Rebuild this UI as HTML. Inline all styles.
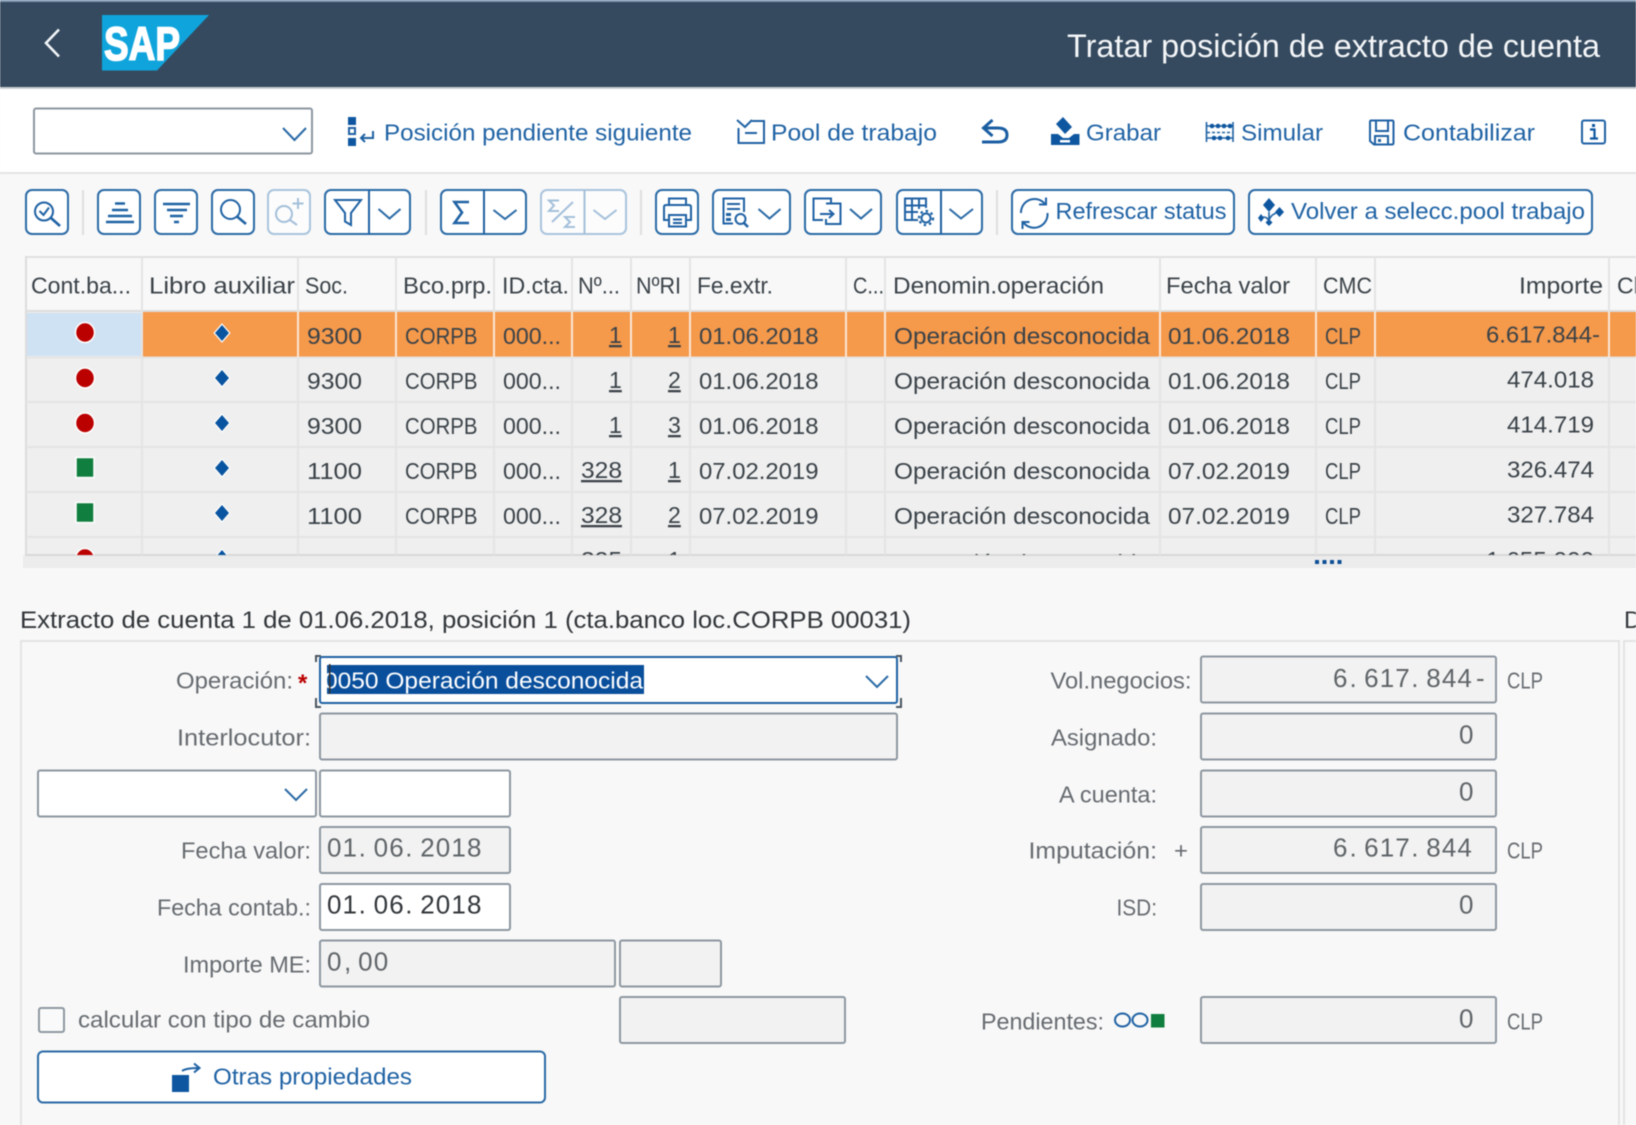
<!DOCTYPE html>
<html lang="es">
<head>
<meta charset="utf-8">
<title>Tratar posición de extracto de cuenta</title>
<style>
html,body{margin:0;padding:0;width:1636px;height:1125px;overflow:hidden;background:#f8f8f8}
svg{display:block;filter:blur(.45px)}
text{font-family:"Liberation Sans",sans-serif;font-size:23px;white-space:pre}
.l{fill:#1f62a4;transform:translateY(.7px)}
.t{fill:#3a4248}
.h{fill:#3a4248;transform:translateY(.5px)}
.f{fill:#666b70;transform:translateY(.7px)}
.m{font-size:26px;fill:#5f6468;transform:translateY(.7px)}
.ro{fill:#f2f2f2;stroke:#8d97a1;stroke-width:2}
.wh{fill:#fff;stroke:#8d97a1;stroke-width:2}
.btn{fill:#fff;stroke:#2a6aa6;stroke-width:2}
.dis{fill:#fcfcfc;stroke:#a9c4dd;stroke-width:2}
.ic{fill:none;stroke:#1f62a4;stroke-width:2}
.icb{fill:none;stroke:#1f62a4;stroke-width:2.6}
.id{fill:none;stroke:#a4c0da;stroke-width:2}
.ch{fill:none;stroke:#2a6aa6;stroke-width:2}
</style>
</head>
<body>
<svg xmlns="http://www.w3.org/2000/svg" width="1636" height="1125" viewBox="0 0 1636 1125">
<defs>
<clipPath id="tb"><rect x="26" y="257" width="1610" height="298"/></clipPath>
<clipPath id="sel"><rect x="327" y="660" width="340" height="40"/></clipPath>
</defs>
<rect width="1636" height="1125" fill="#f8f8f8"/>

<!-- shell header -->
<rect width="1636" height="88" fill="#354a5f"/>
<rect width="1636" height="2" fill="#7d95ae"/>
<rect y="87" width="1636" height="2" fill="#c9ced3"/>
<path d="M59 29.5 L46 43 L59 56.5" fill="none" stroke="#f2f5f8" stroke-width="2.6"/>
<polygon points="102,15 209,15 157,70.5 102,70.5" fill="#0fa4dc"/>
<text x="104" y="60" font-weight="bold" style="font-size:47px" fill="#fff" stroke="#fff" stroke-width="1.6" textLength="76" lengthAdjust="spacingAndGlyphs">SAP</text>
<text x="1067" y="57" fill="#f4f6f8" style="font-size:32px" textLength="533" lengthAdjust="spacingAndGlyphs">Tratar posición de extracto de cuenta</text>

<!-- app toolbar -->
<rect y="89" width="1636" height="83" fill="#fff"/>
<rect y="172" width="1636" height="2" fill="#e3e3e3"/>
<rect x="34" y="108.5" width="278" height="45" rx="2" class="wh"/>
<path d="M283 128 L294.5 140 L306 128" class="ch"/>

<rect x="348" y="117" width="8" height="8" fill="#0e57a0"/>
<rect x="349" y="128" width="6" height="6" fill="none" stroke="#1f62a4" stroke-width="2"/>
<rect x="348" y="138" width="8" height="8" fill="#0e57a0"/>
<path d="M373 131 V138 H361 M365 134 L361 138 L365 142" class="ic"/>
<text x="384" y="140" class="l" textLength="308" lengthAdjust="spacingAndGlyphs">Posición pendiente siguiente</text>

<path d="M738.5 128 V143 H764 V121 H752 M737 120 L745 127 L752 120 M745 133 H757" class="ic"/>
<text x="771" y="140" class="l" textLength="166" lengthAdjust="spacingAndGlyphs">Pool de trabajo</text>

<path d="M992.5 120 L983.5 128 L992.5 136 M984 128 H998 Q1007 128 1007 135 Q1007 142 998 142 H982" fill="none" stroke="#1a5ea2" stroke-width="3"/>

<polygon points="1063,117 1072,127 1065,134 1056,124" fill="#0e57a0"/>
<path d="M1051 134 H1058 L1063 138 H1069 L1074 134 H1079.5 V145 H1051 Z" fill="#0e57a0"/>
<rect x="1060" y="140" width="10" height="2.5" fill="#fff"/>
<text x="1086" y="140" class="l" textLength="75" lengthAdjust="spacingAndGlyphs">Grabar</text>

<path d="M1206.5 122 V142 M1233 122 V142 M1206 126 H1233 M1206 138 H1233" fill="none" stroke="#1f62a4" stroke-width="1.6"/>
<path d="M1207 132.5 H1233" fill="none" stroke="#1f62a4" stroke-width="1.6" stroke-dasharray="3 2"/>
<g fill="#0e57a0"><circle cx="1212" cy="126" r="2.3"/><circle cx="1218" cy="126" r="2.3"/><circle cx="1224" cy="126" r="2.3"/><circle cx="1230" cy="126" r="2.3"/><circle cx="1214" cy="138" r="2.3"/><circle cx="1220" cy="138" r="2.3"/><circle cx="1228" cy="138" r="2.3"/></g>
<text x="1241" y="140" class="l" textLength="82" lengthAdjust="spacingAndGlyphs">Simular</text>

<path d="M1371 120.5 H1392 Q1393.5 120.5 1393.5 122 V143 Q1393.5 144.5 1392 144.5 H1374 L1370 141 V122 Q1370 120.5 1371 120.5 Z M1376 121 V131 H1388 V121 M1375 144 V136 H1388 V144" class="ic"/>
<rect x="1378" y="139" width="3" height="3" fill="#1f62a4"/>
<text x="1403" y="140" class="l" textLength="132" lengthAdjust="spacingAndGlyphs">Contabilizar</text>

<rect x="1582" y="120.5" width="23" height="23" rx="2" class="ic"/>
<path d="M1590 129.5 H1594.5 V138.5 M1590 138.5 H1598" fill="none" stroke="#0e57a0" stroke-width="2.2"/>
<rect x="1592" y="124" width="3" height="3" fill="#0e57a0"/>

<!-- ALV toolbar -->
<g fill="#dedede"><rect x="82" y="190" width="2" height="45"/><rect x="425" y="190" width="2" height="45"/><rect x="640" y="190" width="2" height="45"/><rect x="996" y="190" width="2" height="45"/></g>

<rect x="26" y="190" width="42" height="44" rx="6" class="btn"/>
<circle cx="44" cy="211.5" r="9" class="ic"/>
<path d="M51 218 L60 226" class="icb"/>
<path d="M39.5 211 L43.5 215 L49 207.5" class="ic"/>

<rect x="98" y="190" width="42" height="44" rx="6" class="btn"/>
<path d="M115 203.5 H125 M112 210 H128 M108 216 H132 M106 222 H134" class="icb"/>

<rect x="155" y="190" width="42" height="44" rx="6" class="btn"/>
<path d="M163 204 H190 M167 210 H187 M170 216 H183 M174 222 H179" class="icb"/>

<rect x="212" y="190" width="42" height="44" rx="6" class="btn"/>
<circle cx="230.5" cy="209.5" r="9.5" class="ic"/>
<path d="M237 216.5 L246 224" class="icb"/>

<rect x="268" y="190" width="42" height="44" rx="6" class="dis"/>
<circle cx="284" cy="214" r="8" class="id"/>
<path d="M290 220 L297 225 M298 198 V209 M292.5 203.5 H303.5" class="id"/>

<rect x="325" y="190" width="85" height="44" rx="6" class="btn"/>
<path d="M369 190 V234" class="ic"/>
<path d="M335 200 H361 L351 213 V225 L345 221.5 V213 Z" class="ic"/>
<path d="M378.5 209 L389.5 218.5 L400.5 209" class="ch"/>

<rect x="441" y="190" width="85" height="44" rx="6" class="btn"/>
<path d="M484 190 V234" class="ic"/>
<path d="M469 202 H454.5 L462 212.5 L454.5 223 H469" class="icb"/>
<path d="M493.5 210 L505 219 L516.5 210" class="ch"/>

<rect x="541" y="190" width="85" height="44" rx="6" class="dis"/>
<path d="M584.5 190 V234" class="id"/>
<path d="M559 200.5 H549 L554 205.5 L549 211 H559 M552 222 L573 202 M575 217 H565 L570 222 L565 227 H575" class="id"/>
<path d="M593.5 210 L605 219 L616.5 210" fill="none" stroke="#a4c0da" stroke-width="2"/>

<rect x="656" y="190" width="42" height="44" rx="6" class="btn"/>
<path d="M669 205 V198.5 H686 V205 M669 220 H664 V207 Q664 205 666 205 H689 Q691 205 691 207 V220 H686 M669 215 H686 V226.5 H669 Z M673 219.5 H682 M673 223 H682" class="ic"/>

<rect x="713" y="190" width="77" height="44" rx="6" class="btn"/>
<path d="M733 223.5 H723.5 V198.5 H744 V212 M727 204 H740 M727 209 H740" class="ic"/>
<rect x="726" y="213" width="5" height="3" fill="#1f62a4"/>
<rect x="726" y="218" width="5" height="3" fill="#1f62a4"/>
<circle cx="740.5" cy="219" r="5" class="ic"/>
<path d="M744 223 L748 227" class="icb"/>
<path d="M758.5 209 L769.5 218.5 L780.5 209" class="ch"/>

<rect x="805" y="190" width="76" height="44" rx="6" class="btn"/>
<path d="M831 203 V198.5 H813.5 V220 H823 M826 203.5 H840.5 V224 H826 V219" class="ic"/>
<path d="M820 214 H833 M829 210 L833.5 214 L829 218" class="ic"/>
<path d="M850 209 L861 218.5 L872 209" class="ch"/>

<rect x="897" y="190" width="85" height="44" rx="6" class="btn"/>
<path d="M941 190 V234" class="ic"/>
<path d="M918 212 H905 V198.5 H926 V208 M912 198.5 V220 H918 M919 198.5 V209 M905 205.5 H926 M905 213 V220 H914" class="ic"/>
<circle cx="926" cy="218" r="4.5" class="ic"/>
<circle cx="926" cy="218" r="7" fill="none" stroke="#1f62a4" stroke-width="2.4" stroke-dasharray="2.4 3"/>
<path d="M949.5 209 L961 218.5 L973 209" class="ch"/>

<rect x="1012" y="190" width="222" height="44" rx="6" class="btn"/>
<path d="M1021 213 A13.5 13.5 0 0 1 1045 204 M1047.5 213 A13.5 13.5 0 0 1 1023 222" class="ic"/>
<path d="M1039 204.5 H1046 V197.5 M1029.5 222 H1022.5 V229" class="ic"/>
<text x="1055.5" y="218.5" class="l" textLength="171" lengthAdjust="spacingAndGlyphs">Refrescar status</text>

<rect x="1249" y="190" width="343" height="44" rx="6" class="btn"/>
<polygon points="1269,198 1275,205 1269,212 1263,205" fill="#0e57a0"/>
<polygon points="1279.5,207 1284,212 1279.5,217 1275,212" fill="#0e57a0"/>
<polygon points="1261,214 1264,218 1261,222 1258,218" fill="#0e57a0"/>
<polygon points="1269,219 1272.5,222.5 1269,226 1265.5,222.5" fill="#0e57a0"/>
<path d="M1269 212 V222 M1269 222 Q1269 216 1276 213 M1269 222 Q1268 217 1263 217" fill="none" stroke="#1f62a4" stroke-width="1.6"/>
<text x="1291" y="218.5" class="l" textLength="294" lengthAdjust="spacingAndGlyphs">Volver a selecc.pool trabajo</text>

<!-- table -->
<rect x="23" y="555" width="1613" height="13" fill="#ececec"/>
<g fill="#0e4f96"><rect x="1315" y="560" width="4" height="4"/><rect x="1322.5" y="560" width="4" height="4"/><rect x="1330" y="560" width="4" height="4"/><rect x="1337.5" y="560" width="4" height="4"/></g>
<rect x="26" y="257" width="1610" height="298" fill="#efefef"/>
<rect x="26" y="257" width="1610" height="54" fill="#f8f8f8"/>
<rect x="25" y="256" width="1611" height="2" fill="#e0e0e0"/>
<rect x="25" y="256" width="2" height="300" fill="#dcdcdc"/>
<rect x="26" y="310" width="1610" height="2" fill="#dcdcdc"/>
<rect x="26" y="554" width="1610" height="2" fill="#d8d8d8"/>
<rect x="27" y="313" width="115" height="43" fill="#cfe2f3"/>
<rect x="142" y="312" width="1494" height="44.5" fill="#f5994b"/>
<g fill="#e4e4e4">
<rect x="26" y="356.5" width="1610" height="2"/><rect x="26" y="401" width="1610" height="2"/><rect x="26" y="446" width="1610" height="2"/><rect x="26" y="491" width="1610" height="2"/><rect x="26" y="536" width="1610" height="2"/>
<rect x="141" y="257" width="2" height="298"/><rect x="297" y="257" width="2" height="298"/><rect x="395" y="257" width="2" height="298"/><rect x="493" y="257" width="2" height="298"/><rect x="571" y="257" width="2" height="298"/><rect x="630" y="257" width="2" height="298"/><rect x="689" y="257" width="2" height="298"/><rect x="845" y="257" width="2" height="298"/><rect x="884" y="257" width="2" height="298"/><rect x="1159" y="257" width="2" height="298"/><rect x="1315" y="257" width="2" height="298"/><rect x="1374" y="257" width="2" height="298"/><rect x="1608" y="257" width="2" height="298"/>
</g>
<g fill="#fae6d4">
<rect x="297" y="312" width="2" height="45"/><rect x="395" y="312" width="2" height="45"/><rect x="493" y="312" width="2" height="45"/><rect x="571" y="312" width="2" height="45"/><rect x="630" y="312" width="2" height="45"/><rect x="689" y="312" width="2" height="45"/><rect x="845" y="312" width="2" height="45"/><rect x="884" y="312" width="2" height="45"/><rect x="1159" y="312" width="2" height="45"/><rect x="1315" y="312" width="2" height="45"/><rect x="1374" y="312" width="2" height="45"/><rect x="1608" y="312" width="2" height="45"/>
</g>

<g>
<text x="31" y="293" class="h" textLength="100" lengthAdjust="spacingAndGlyphs">Cont.ba...</text>
<text x="149" y="293" class="h" textLength="146" lengthAdjust="spacingAndGlyphs">Libro auxiliar</text>
<text x="305" y="293" class="h" textLength="43" lengthAdjust="spacingAndGlyphs">Soc.</text>
<text x="403" y="293" class="h" textLength="89" lengthAdjust="spacingAndGlyphs">Bco.prp.</text>
<text x="502" y="293" class="h" textLength="67" lengthAdjust="spacingAndGlyphs">ID.cta.</text>
<text x="578" y="293" class="h" textLength="42" lengthAdjust="spacingAndGlyphs">Nº...</text>
<text x="636" y="293" class="h" textLength="45" lengthAdjust="spacingAndGlyphs">NºRI</text>
<text x="697" y="293" class="h" textLength="76" lengthAdjust="spacingAndGlyphs">Fe.extr.</text>
<text x="853" y="293" class="h" textLength="31" lengthAdjust="spacingAndGlyphs">C...</text>
<text x="893" y="293" class="h" textLength="211" lengthAdjust="spacingAndGlyphs">Denomin.operación</text>
<text x="1166" y="293" class="h" textLength="124" lengthAdjust="spacingAndGlyphs">Fecha valor</text>
<text x="1323" y="293" class="h" textLength="49" lengthAdjust="spacingAndGlyphs">CMC</text>
<text x="1519" y="293" class="h" textLength="84" lengthAdjust="spacingAndGlyphs">Importe</text>
<text x="1617" y="293" class="h">Cl</text>
</g>

<g clip-path="url(#tb)">
<!-- status + ledger icons -->
<g stroke="#fff" stroke-width="1.5">
<ellipse cx="85" cy="332.5" rx="9.5" ry="10" fill="#bb0000"/>
<ellipse cx="85" cy="378" rx="9.5" ry="10" fill="#bb0000"/>
<ellipse cx="85" cy="423" rx="9.5" ry="10" fill="#bb0000"/>
<rect x="76" y="457.5" width="18" height="20" fill="#107e3e"/>
<rect x="76" y="502.5" width="18" height="20" fill="#107e3e"/>
<ellipse cx="85" cy="558.5" rx="9.5" ry="10" fill="#bb0000"/>
</g>
<g stroke="#fff" stroke-width="2.4" paint-order="stroke">
<polygon points="222,325 229,333 222,341 215,333" fill="#0854a0"/>
<polygon points="222,370 229,378 222,386 215,378" fill="#0854a0"/>
<polygon points="222,415 229,423 222,431 215,423" fill="#0854a0"/>
<polygon points="222,460 229,468 222,476 215,468" fill="#0854a0"/>
<polygon points="222,505 229,513 222,521 215,513" fill="#0854a0"/>
<polygon points="222,550 229,558 222,566 215,558" fill="#0854a0"/>
</g>

<!-- row 1 -->
<g transform="translate(0,344)">
<text x="307" class="t" textLength="55" lengthAdjust="spacingAndGlyphs">9300</text>
<text x="405" class="t" textLength="72.5" lengthAdjust="spacingAndGlyphs">CORPB</text>
<text x="503" class="t" textLength="58" lengthAdjust="spacingAndGlyphs">000...</text>
<text x="609" y="-1" class="t" text-decoration="underline" textLength="12">1</text>
<text x="668" y="-1" class="t" text-decoration="underline" textLength="12">1</text>
<text x="699" class="t" textLength="119.5" lengthAdjust="spacingAndGlyphs">01.06.2018</text>
<text x="894" class="t" textLength="256" lengthAdjust="spacingAndGlyphs">Operación desconocida</text>
<text x="1168" class="t" textLength="122" lengthAdjust="spacingAndGlyphs">01.06.2018</text>
<text x="1325" class="t" textLength="36" lengthAdjust="spacingAndGlyphs">CLP</text>
<text x="1486" y="-1.5" class="t" textLength="114" lengthAdjust="spacingAndGlyphs">6.617.844-</text>
</g>
<!-- row 2 -->
<g transform="translate(0,389)">
<text x="307" class="t" textLength="55" lengthAdjust="spacingAndGlyphs">9300</text>
<text x="405" class="t" textLength="72.5" lengthAdjust="spacingAndGlyphs">CORPB</text>
<text x="503" class="t" textLength="58" lengthAdjust="spacingAndGlyphs">000...</text>
<text x="609" y="-1" class="t" text-decoration="underline" textLength="12">1</text>
<text x="668" y="-1" class="t" text-decoration="underline" textLength="12">2</text>
<text x="699" class="t" textLength="119.5" lengthAdjust="spacingAndGlyphs">01.06.2018</text>
<text x="894" class="t" textLength="256" lengthAdjust="spacingAndGlyphs">Operación desconocida</text>
<text x="1168" class="t" textLength="122" lengthAdjust="spacingAndGlyphs">01.06.2018</text>
<text x="1325" class="t" textLength="36" lengthAdjust="spacingAndGlyphs">CLP</text>
<text x="1507" y="-1.5" class="t" textLength="87" lengthAdjust="spacingAndGlyphs">474.018</text>
</g>
<!-- row 3 -->
<g transform="translate(0,434)">
<text x="307" class="t" textLength="55" lengthAdjust="spacingAndGlyphs">9300</text>
<text x="405" class="t" textLength="72.5" lengthAdjust="spacingAndGlyphs">CORPB</text>
<text x="503" class="t" textLength="58" lengthAdjust="spacingAndGlyphs">000...</text>
<text x="609" y="-1" class="t" text-decoration="underline" textLength="12">1</text>
<text x="668" y="-1" class="t" text-decoration="underline" textLength="12">3</text>
<text x="699" class="t" textLength="119.5" lengthAdjust="spacingAndGlyphs">01.06.2018</text>
<text x="894" class="t" textLength="256" lengthAdjust="spacingAndGlyphs">Operación desconocida</text>
<text x="1168" class="t" textLength="122" lengthAdjust="spacingAndGlyphs">01.06.2018</text>
<text x="1325" class="t" textLength="36" lengthAdjust="spacingAndGlyphs">CLP</text>
<text x="1507" y="-1.5" class="t" textLength="87" lengthAdjust="spacingAndGlyphs">414.719</text>
</g>
<!-- row 4 -->
<g transform="translate(0,479)">
<text x="307" class="t" textLength="55" lengthAdjust="spacingAndGlyphs">1100</text>
<text x="405" class="t" textLength="72.5" lengthAdjust="spacingAndGlyphs">CORPB</text>
<text x="503" class="t" textLength="58" lengthAdjust="spacingAndGlyphs">000...</text>
<text x="581" y="-1" class="t" text-decoration="underline" textLength="41" lengthAdjust="spacingAndGlyphs">328</text>
<text x="668" y="-1" class="t" text-decoration="underline" textLength="12">1</text>
<text x="699" class="t" textLength="119.5" lengthAdjust="spacingAndGlyphs">07.02.2019</text>
<text x="894" class="t" textLength="256" lengthAdjust="spacingAndGlyphs">Operación desconocida</text>
<text x="1168" class="t" textLength="122" lengthAdjust="spacingAndGlyphs">07.02.2019</text>
<text x="1325" class="t" textLength="36" lengthAdjust="spacingAndGlyphs">CLP</text>
<text x="1507" y="-1.5" class="t" textLength="87" lengthAdjust="spacingAndGlyphs">326.474</text>
</g>
<!-- row 5 -->
<g transform="translate(0,524)">
<text x="307" class="t" textLength="55" lengthAdjust="spacingAndGlyphs">1100</text>
<text x="405" class="t" textLength="72.5" lengthAdjust="spacingAndGlyphs">CORPB</text>
<text x="503" class="t" textLength="58" lengthAdjust="spacingAndGlyphs">000...</text>
<text x="581" y="-1" class="t" text-decoration="underline" textLength="41" lengthAdjust="spacingAndGlyphs">328</text>
<text x="668" y="-1" class="t" text-decoration="underline" textLength="12">2</text>
<text x="699" class="t" textLength="119.5" lengthAdjust="spacingAndGlyphs">07.02.2019</text>
<text x="894" class="t" textLength="256" lengthAdjust="spacingAndGlyphs">Operación desconocida</text>
<text x="1168" class="t" textLength="122" lengthAdjust="spacingAndGlyphs">07.02.2019</text>
<text x="1325" class="t" textLength="36" lengthAdjust="spacingAndGlyphs">CLP</text>
<text x="1507" y="-1.5" class="t" textLength="87" lengthAdjust="spacingAndGlyphs">327.784</text>
</g>
<!-- row 6 (clipped) -->
<g>
<text x="581" y="568" class="t" textLength="41" lengthAdjust="spacingAndGlyphs">325</text>
<text x="668" y="568" class="t" textLength="12">1</text>
<text x="894" y="571" class="t" textLength="256" lengthAdjust="spacingAndGlyphs">Operación desconocida</text>
<text x="1486" y="568" class="t" textLength="108" lengthAdjust="spacingAndGlyphs">1.655.000</text>
</g>
</g>

<!-- detail panel -->
<text x="20" y="628" style="font-size:24px" fill="#32363a" textLength="891" lengthAdjust="spacingAndGlyphs">Extracto de cuenta 1 de 01.06.2018, posición 1 (cta.banco loc.CORPB 00031)</text>
<text x="1624" y="628" style="font-size:24px" fill="#32363a">D</text>
<path d="M21 1125 V641 H1619 V1125" fill="none" stroke="#e3e3e3" stroke-width="2"/>
<path d="M1636 641 H1624 V1125" fill="none" stroke="#e3e3e3" stroke-width="2"/>

<!-- left form -->
<text x="176" y="688" class="f" textLength="117" lengthAdjust="spacingAndGlyphs">Operación:</text>
<text x="298" y="691" fill="#bb0000" style="font-size:24px;font-weight:bold">*</text>
<rect x="320" y="657" width="577" height="46" rx="2" fill="#fff" stroke="#1f62a4" stroke-width="2"/>
<path d="M321 656 H316 V662 M896 656 H901 V662 M316 698 V707 H321 M901 698 V707 H896" fill="none" stroke="#4a5560" stroke-width="2"/>
<rect x="327" y="665" width="317" height="29" fill="#0a4f9c"/>
<g clip-path="url(#sel)"><text x="324" y="688.7" fill="#fff" textLength="319" lengthAdjust="spacingAndGlyphs">0050 Operación desconocida</text></g>
<rect x="329" y="664" width="1.5" height="30" fill="#333"/>
<path d="M866 676 L877 687 L888 676" class="ch"/>

<text x="177" y="745" class="f" textLength="134" lengthAdjust="spacingAndGlyphs">Interlocutor:</text>
<rect x="320" y="713.5" width="577" height="46" rx="2" class="ro"/>

<rect x="38" y="770.5" width="278" height="46" rx="2" class="wh"/>
<path d="M285 789 L296 800 L307 789" class="ch"/>
<rect x="320" y="770.5" width="190" height="46" rx="2" class="wh"/>

<text x="181" y="858" class="f" textLength="130" lengthAdjust="spacingAndGlyphs">Fecha valor:</text>
<rect x="320" y="827" width="190" height="46" rx="2" class="ro"/>
<text class="m" y="856" x="327 342.5 358.6 373.6 389.2 405.2 420.3 435.8 451.4 467">01.06.2018</text>

<text x="157" y="915" class="f" textLength="154" lengthAdjust="spacingAndGlyphs">Fecha contab.:</text>
<rect x="320" y="884" width="190" height="46" rx="2" class="wh"/>
<text class="m" style="fill:#32363a" y="913" x="327 342.5 358.6 373.6 389.2 405.2 420.3 435.8 451.4 467">01.06.2018</text>

<text x="183" y="972" class="f" textLength="128" lengthAdjust="spacingAndGlyphs">Importe ME:</text>
<rect x="320" y="940.5" width="295" height="46" rx="2" class="ro"/>
<rect x="620" y="940.5" width="101" height="46" rx="2" class="ro"/>
<text class="m" y="970" x="327 344 358.1 373.7">0,00</text>

<rect x="39" y="1008" width="25" height="24" rx="2" fill="#fafafa" stroke="#8d97a1" stroke-width="2"/>
<text x="78" y="1027" class="f" textLength="292" lengthAdjust="spacingAndGlyphs">calcular con tipo de cambio</text>
<rect x="620" y="997" width="225" height="46" rx="2" class="ro"/>

<rect x="38" y="1051.5" width="507" height="51" rx="5" class="btn"/>
<rect x="172" y="1075" width="17" height="17" fill="#0e57a0"/>
<path d="M182 1071 Q186 1068 199 1068 M194 1063.5 L199.5 1068 L194 1072.5" class="ic"/>
<text x="213" y="1084" class="l" textLength="199" lengthAdjust="spacingAndGlyphs">Otras propiedades</text>

<!-- right form -->
<text x="1050.5" y="688" class="f" textLength="141" lengthAdjust="spacingAndGlyphs">Vol.negocios:</text>
<rect x="1201" y="656.5" width="295" height="46" rx="2" class="ro"/>
<text class="m" y="686.5" x="1333 1349.5 1364.1 1379.7 1395.2 1411.2 1426.3 1441.9 1457.4 1476">6.617.844-</text>
<text x="1507" y="688" class="f" textLength="36" lengthAdjust="spacingAndGlyphs">CLP</text>

<text x="1051" y="745" class="f" textLength="106" lengthAdjust="spacingAndGlyphs">Asignado:</text>
<rect x="1201" y="713.5" width="295" height="46" rx="2" class="ro"/>
<text x="1459" y="743" class="m">0</text>

<text x="1059" y="802" class="f" textLength="98" lengthAdjust="spacingAndGlyphs">A cuenta:</text>
<rect x="1201" y="770.5" width="295" height="46" rx="2" class="ro"/>
<text x="1459" y="800" class="m">0</text>

<text x="1028.5" y="858" class="f" textLength="128.5" lengthAdjust="spacingAndGlyphs">Imputación:</text>
<text x="1174" y="858" class="f" textLength="14" lengthAdjust="spacingAndGlyphs">+</text>
<rect x="1201" y="827" width="295" height="46" rx="2" class="ro"/>
<text class="m" y="856" x="1333 1349.5 1364.1 1379.7 1395.2 1411.2 1426.3 1441.9 1457.4">6.617.844</text>
<text x="1507" y="858" class="f" textLength="36" lengthAdjust="spacingAndGlyphs">CLP</text>

<text x="1116.5" y="915" class="f" textLength="40.5" lengthAdjust="spacingAndGlyphs">ISD:</text>
<rect x="1201" y="884" width="295" height="46" rx="2" class="ro"/>
<text x="1459" y="913" class="m">0</text>

<text x="981" y="1029" class="f" textLength="123" lengthAdjust="spacingAndGlyphs">Pendientes:</text>
<ellipse cx="1122.5" cy="1020" rx="7.5" ry="6.5" fill="none" stroke="#1f62a4" stroke-width="2"/>
<ellipse cx="1140" cy="1020" rx="7.5" ry="6.5" fill="none" stroke="#1f62a4" stroke-width="2"/>
<rect x="1151" y="1014" width="13.5" height="13.5" fill="#107e3e"/>
<rect x="1201" y="997" width="295" height="46" rx="2" class="ro"/>
<text x="1459" y="1027" class="m">0</text>
<text x="1507" y="1029" class="f" textLength="36" lengthAdjust="spacingAndGlyphs">CLP</text>
</svg>
</body>
</html>
